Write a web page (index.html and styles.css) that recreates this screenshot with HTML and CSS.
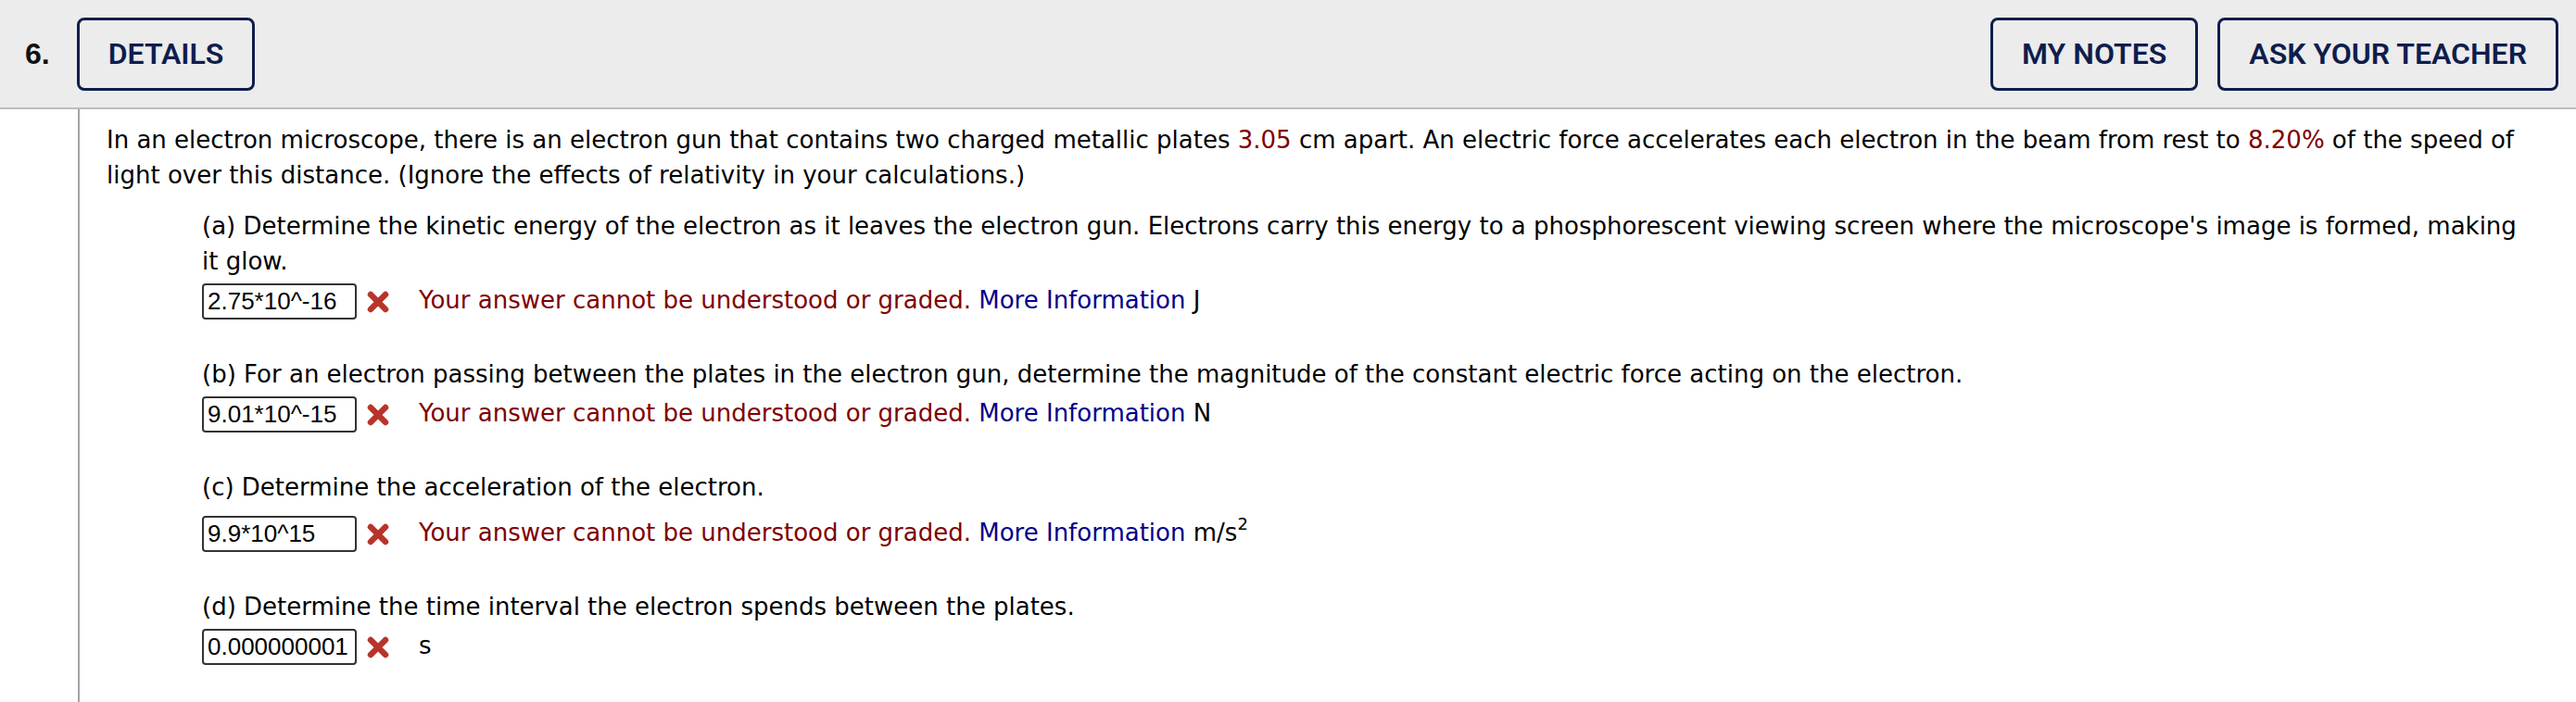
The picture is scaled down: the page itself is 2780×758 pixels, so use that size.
FILE: index.html
```html
<!DOCTYPE html>
<html lang="en">
<head>
<meta charset="utf-8">
<title>Question 6</title>
<link rel="stylesheet" href="styles.css">
</head>
<body>
<header class="qhead">
  <span class="qnum">6.</span>
  <button class="btn btn-details">DETAILS</button>
  <div class="qactions">
    <button class="btn">MY NOTES</button>
    <button class="btn">ASK YOUR TEACHER</button>
  </div>
</header>
<main class="qbody">
  <p class="intro">In an electron microscope, there is an electron gun that contains two charged metallic plates <span class="val">3.05</span> cm apart. An electric force accelerates each electron in the beam from rest to <span class="val">8.20%</span> of the speed of light over this distance. (Ignore the effects of relativity in your calculations.)</p>
  <div class="parts">
    <div class="part">
      <p class="ptext">(a) Determine the kinetic energy of the electron as it leaves the electron gun. Electrons carry this energy to a phosphorescent viewing screen where the microscope's image is formed, making it glow.</p>
      <div class="ans"><span class="box">2.75*10^-16</span><svg class="xmark" viewBox="0 0 28 28"><path d="M6 6 L22 22 M22 6 L6 22"/></svg><span class="err">Your answer cannot be understood or graded.</span> <a class="info">More Information</a> J</div>
    </div>
    <div class="part">
      <p class="ptext">(b) For an electron passing between the plates in the electron gun, determine the magnitude of the constant electric force acting on the electron.</p>
      <div class="ans"><span class="box">9.01*10^-15</span><svg class="xmark" viewBox="0 0 28 28"><path d="M6 6 L22 22 M22 6 L6 22"/></svg><span class="err">Your answer cannot be understood or graded.</span> <a class="info">More Information</a> N</div>
    </div>
    <div class="part">
      <p class="ptext">(c) Determine the acceleration of the electron.</p>
      <div class="ans"><span class="box">9.9*10^15</span><svg class="xmark" viewBox="0 0 28 28"><path d="M6 6 L22 22 M22 6 L6 22"/></svg><span class="err">Your answer cannot be understood or graded.</span> <a class="info">More Information</a> m/s<sup>2</sup></div>
    </div>
    <div class="part">
      <p class="ptext">(d) Determine the time interval the electron spends between the plates.</p>
      <div class="ans"><span class="box">0.000000001</span><svg class="xmark" viewBox="0 0 28 28"><path d="M6 6 L22 22 M22 6 L6 22"/></svg>s</div>
    </div>
  </div>
</main>
</body>
</html>
```

FILE: styles.css
```css
html, body {
  margin: 0;
  padding: 0;
  background: #ffffff;
}

body {
  font-family: "DejaVu Sans", Verdana, sans-serif;
  color: #000000;
  height: 758px;
  overflow: hidden;
}

.qhead {
  display: flex;
  align-items: center;
  height: 116px;
  background: #ececec;
  border-bottom: 2px solid #bdbdbd;
  padding: 0 19px 0 27px;
}

.qnum {
  font-family: "Liberation Sans", Arial, sans-serif;
  font-weight: 700;
  font-size: 32px;
  color: #111111;
}

.btn {
  height: 79px;
  box-sizing: border-box;
  border: 3px solid #0f1d4c;
  border-radius: 8px;
  background: transparent;
  color: #0f1d4c;
  font-family: Roboto, "Liberation Sans", sans-serif;
  font-weight: 600;
  font-size: 32px;
  padding: 0 31px;
  cursor: pointer;
}

.btn-details {
  margin-left: 29px;
}

.qactions {
  margin-left: auto;
  display: flex;
  gap: 21px;
}

.qbody {
  margin-left: 84px;
  border-left: 2px solid #a3a3a3;
  padding: 14px 50px 0 29px;
  height: 640px;
  box-sizing: border-box;
  font-size: 26px;
}

.intro {
  margin: 0;
  line-height: 38px;
}

.val {
  color: #800000;
}

.parts {
  padding-left: 103px;
  margin-top: 17px;
}

.part + .part {
  margin-top: 38px;
}

.ptext {
  margin: 0;
  line-height: 38px;
}

.ans {
  line-height: 46px;
  white-space: nowrap;
}

.box {
  display: inline-block;
  vertical-align: middle;
  width: 167px;
  height: 39px;
  box-sizing: border-box;
  border: 2px solid #333333;
  border-radius: 4px;
  font-family: "Liberation Sans", Arial, sans-serif;
  font-size: 26px;
  line-height: 35px;
  padding-left: 4px;
  overflow: hidden;
  white-space: nowrap;
  color: #000000;
}

.xmark {
  width: 28px;
  height: 28px;
  vertical-align: middle;
  margin: 0 30px 0 9px;
}

.xmark path {
  stroke: #b8342b;
  stroke-width: 6.5;
  stroke-linecap: round;
  fill: none;
}

.err {
  color: #800000;
}

.info {
  color: #00008b;
  text-decoration: none;
}

sup {
  font-size: 18px;
  line-height: 42px;
  vertical-align: 12px;
}
```
